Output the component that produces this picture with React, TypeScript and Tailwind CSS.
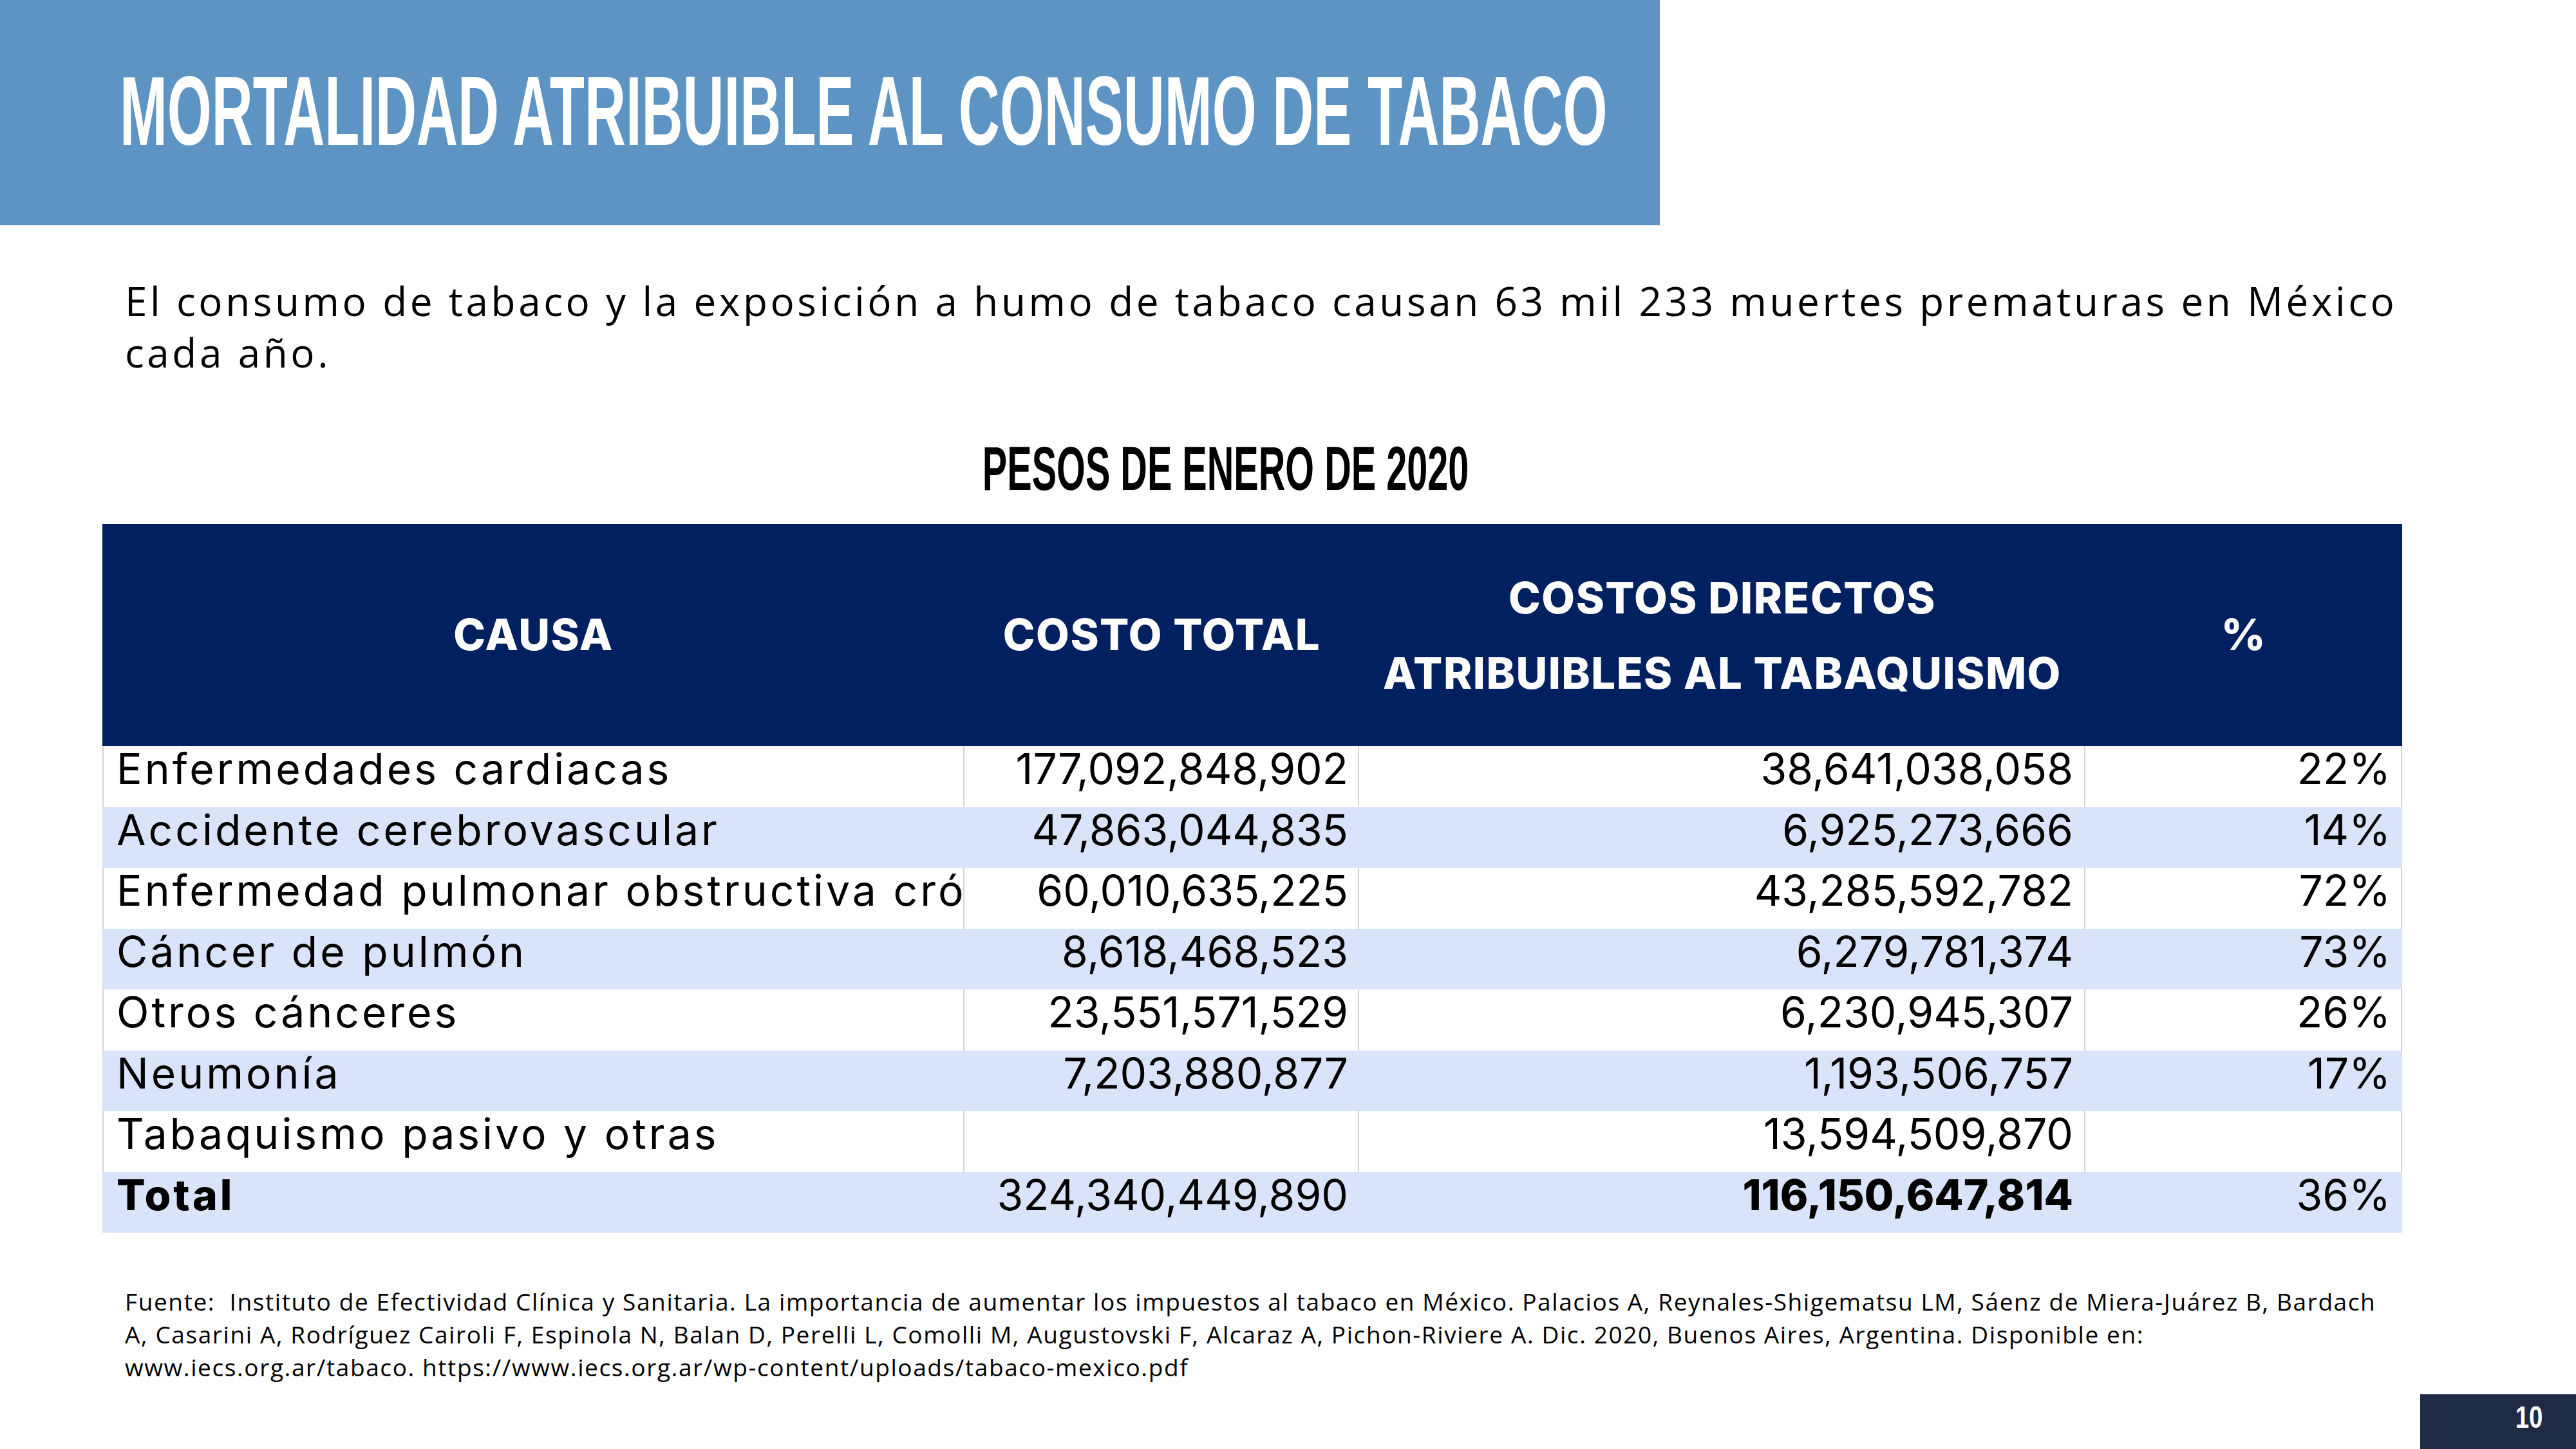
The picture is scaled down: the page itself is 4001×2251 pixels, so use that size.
const rows = [
  ["Enfermedades cardiacas", "177,092,848,902", "38,641,038,058", "22%"],
  ["Accidente cerebrovascular", "47,863,044,835", "6,925,273,666", "14%"],
  ["Enfermedad pulmonar obstructiva crónica", "60,010,635,225", "43,285,592,782", "72%"],
  ["Cáncer de pulmón", "8,618,468,523", "6,279,781,374", "73%"],
  ["Otros cánceres", "23,551,571,529", "6,230,945,307", "26%"],
  ["Neumonía", "7,203,880,877", "1,193,506,757", "17%"],
  ["Tabaquismo pasivo y otras", "", "13,594,509,870", ""],
  ["Total", "324,340,449,890", "116,150,647,814", "36%"],
];

const cols = "grid grid-cols-[1339px_613px_1128px_492px]";

const Header = () => {
  return (
    <div className="flex h-[350px] w-[2578px] items-center bg-[#5d94c4] pb-[6px] pl-[186px]">
      <span className="inline-block origin-left scale-x-[0.583] whitespace-nowrap font-['Liberation_Sans',sans-serif] text-[152px] font-bold leading-none text-white">
        MORTALIDAD ATRIBUIBLE AL CONSUMO DE TABACO
      </span>
    </div>
  );
};

const CostTable = () => {
  return (
    <div className="ml-[159px] w-[3572px] font-['Inter',sans-serif]">
      <div className={`${cols} h-[345px] bg-[#002060] text-[67px] font-extrabold tracking-[1.5px] text-white`}>
        <div className="flex items-center justify-center">CAUSA</div>
        <div className="flex items-center justify-center">COSTO TOTAL</div>
        <div className="flex items-center justify-center text-center leading-[117px]">
          COSTOS DIRECTOS
          <br />
          ATRIBUIBLES AL TABAQUISMO
        </div>
        <div className="flex items-center justify-center">%</div>
      </div>
      {rows.map((r, i) => {
        const blue = i % 2 === 1;
        const total = i === rows.length - 1;
        const line = blue ? "border-transparent" : "border-[#d4d4d4]";
        return (
          <div
            key={r[0]}
            className={`${cols} h-[94.5px] text-[66px] leading-none text-black ${
              blue ? "bg-[#d9e3f9]" : "bg-white"
            }`}
          >
            <div
              className={`whitespace-nowrap border-l-2 border-r-2 pl-[20px] pt-[2px] tracking-[4px] ${line} ${
                r[0].length > 30 ? "overflow-hidden" : ""
              } ${total ? "font-extrabold tracking-[2px]" : ""}`}
            >
              {r[0]}
            </div>
            <div className={`border-r-2 pr-[15px] pt-[2px] text-right ${line}`}>{r[1]}</div>
            <div
              className={`border-r-2 pr-[17px] pt-[2px] text-right ${line} ${
                total ? "font-extrabold" : ""
              }`}
            >
              {r[2]}
            </div>
            <div className={`border-r-2 pr-[16px] pt-[2px] text-right ${line}`}>{r[3]}</div>
          </div>
        );
      })}
    </div>
  );
};

export default function App() {
  return (
    <div className="flex h-[2251px] w-[4001px] flex-col overflow-hidden bg-white">
      <Header />

      <p className="ml-[194px] mt-[77px] font-['Open_Sans',sans-serif] text-[62px] leading-[80px] tracking-[4.6px] text-black">
        El consumo de tabaco y la exposición a humo de tabaco causan 63 mil 233 muertes prematuras en México
        <br />
        cada año.
      </p>

      <div className="mt-[93px] flex w-[3808px] justify-center">
        <span className="inline-block origin-center scale-x-[0.6] whitespace-nowrap font-['Liberation_Sans',sans-serif] text-[96px] font-bold leading-none text-black">
          PESOS DE ENERO DE 2020
        </span>
      </div>

      <div className="mt-[38px]">
        <CostTable />
      </div>

      <p className="ml-[194px] mt-[81px] font-['Open_Sans',sans-serif] text-[37px] leading-[51px] tracking-[1.6px] text-black">
        Fuente:&nbsp; Instituto de Efectividad Clínica y Sanitaria. La importancia de aumentar los impuestos al tabaco en
        México. Palacios A, Reynales-Shigematsu LM, Sáenz de Miera-Juárez B, Bardach
        <br />
        A, Casarini A, Rodríguez Cairoli F, Espinola N, Balan D, Perelli L, Comolli M, Augustovski F, Alcaraz A,
        Pichon-Riviere A. Dic. 2020, Buenos Aires, Argentina. Disponible en:
        <br />
        www.iecs.org.ar/tabaco. https://www.iecs.org.ar/wp-content/uploads/tabaco-mexico.pdf
      </p>

      <div className="mt-auto flex justify-end">
        <div className="flex h-[85px] w-[242px] justify-end bg-[#1f2a44] pr-[52px] pt-[12px]">
          <span className="inline-block origin-right scale-x-[0.8] font-['Liberation_Sans',sans-serif] text-[48px] font-bold leading-none text-white">
            10
          </span>
        </div>
      </div>
    </div>
  );
}
